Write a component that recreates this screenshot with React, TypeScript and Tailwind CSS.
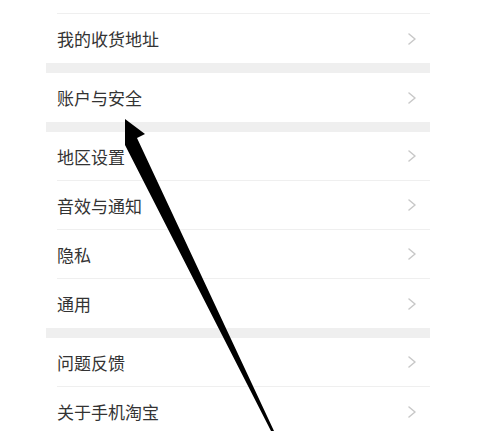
const groups: string[][] = [
  ["我的收货地址"],
  ["账户与安全"],
  ["地区设置", "音效与通知", "隐私", "通用"],
  ["问题反馈", "关于手机淘宝"],
];

function Chevron() {
  return (
    <svg width="8" height="12" viewBox="0 0 8 12" fill="none">
      <polyline points="1,1 7,6 1,11" stroke="#c8c8c8" strokeWidth="1.5" strokeLinejoin="round" strokeLinecap="round" />
    </svg>
  );
}

function Row({ label, last }: { label: string; last: boolean }) {
  return (
    <div className="pl-[11px]">
      <div
        className={`flex h-[49px] items-center justify-between pr-[14px] ${last ? "" : "border-b border-[#efefef]"}`}
      >
        <span className="text-[17px] leading-none text-[#333]">{label}</span>
        <Chevron />
      </div>
    </div>
  );
}

export default function App() {
  return (
    <div
      className="relative h-[431px] w-[495px] overflow-hidden bg-white"
      style={{ fontFamily: '"Noto Sans CJK SC", "Noto Sans", sans-serif' }}
    >
      <div className="ml-[46px] w-[384px]">
        <div className="pl-[11px]">
          <div className="h-[14px] border-b border-[#efefef]" />
        </div>
        {groups.map((g, gi) => (
          <div key={gi}>
            {gi > 0 && <div className="h-[10px] bg-[#efefef]" />}
            {g.map((label, i) => (
              <Row key={label} label={label} last={i === g.length - 1} />
            ))}
          </div>
        ))}
      </div>

      <svg className="pointer-events-none absolute inset-0" width="495" height="431" viewBox="0 0 495 431">
        <polygon points="125,119 145,134 137,138 274,431 271,431 125,145" fill="#000" />
      </svg>
    </div>
  );
}
